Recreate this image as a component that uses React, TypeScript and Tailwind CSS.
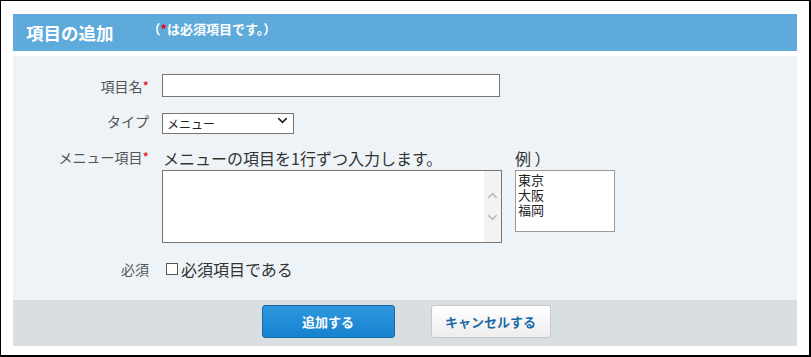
import { ChevronDown, ChevronUp } from 'lucide-react';

const font = { fontFamily: '"Noto Sans CJK JP", "Noto Sans", sans-serif' };

function Label({ text, required }: { text: string; required?: boolean }) {
  return (
    <div className="w-[136px] shrink-0 text-right text-[14px] leading-[20px] text-[#555]">
      {text}
      {required && <span className="text-[#e60012]">*</span>}
    </div>
  );
}

export default function App() {
  return (
    <div
      className="w-[811px] h-[357px] bg-white border-l border-t border-r-2 border-b-2 border-black box-border pt-[13px] pl-[12px] pr-[12px]"
      style={font}
    >
      {/* Header */}
      <div className="h-[37px] bg-[#5eaadb] flex items-center pl-[13px]">
        <span className="text-white font-bold text-[17.5px] leading-none">項目の追加</span>
        <span className="ml-[34px] -mt-[9px] text-white font-bold text-[13px] leading-none">
          （<span className="text-[#e60012]">*</span>は必須項目です。）
        </span>
      </div>

      {/* Body */}
      <div className="mt-[5px] bg-[#eef3f7] pt-[18px] pb-[21px] flex flex-col">
        <div className="flex items-center gap-[13px] h-[23px]">
          <Label text="項目名" required />
          <input
            type="text"
            className="w-[338px] h-[23px] bg-white border border-[#767676] outline-none px-1 text-[13px]"
          />
        </div>

        <div className="flex items-center gap-[13px] mt-[13px] h-[21px]">
          <Label text="タイプ" />
          <div className="relative w-[132px] h-[21px]">
            <select className="appearance-none w-full h-full bg-white border border-[#767676] rounded-none pl-[4px] text-[12px] leading-[19px] text-[#222] outline-none">
              <option>メニュー</option>
            </select>
            <ChevronDown
              className="absolute right-[4px] top-[3px] w-[15px] h-[15px] text-[#222] pointer-events-none"
              strokeWidth={2.5}
            />
          </div>
        </div>

        <div className="flex items-start gap-[13px] mt-[15px]">
          <div className="pt-[1px]">
            <Label text="メニュー項目" required />
          </div>
          <div className="flex flex-col">
            <div className="text-[16px] leading-[24px] text-[#333] pl-[1px]">
              メニューの項目を1行ずつ入力します。
            </div>
            <div className="w-[340px] h-[73px] bg-white border border-[#767676] flex">
              <textarea className="flex-1 resize-none outline-none border-none bg-white" />
              <div className="w-[17px] bg-[#f3f3f3] flex flex-col items-center justify-center gap-[7px]">
                <ChevronUp className="w-[15px] h-[15px] text-[#bdbdbd]" strokeWidth={2.5} />
                <ChevronDown className="w-[15px] h-[15px] text-[#bdbdbd]" strokeWidth={2.5} />
              </div>
            </div>
          </div>
          <div className="flex flex-col">
            <div className="text-[16px] leading-[24px] text-[#333]">例 ）</div>
            <textarea
              readOnly
              value={'東京\n大阪\n福岡'}
              className="w-[100px] h-[62px] bg-white border border-[#999] pl-[2px] pt-[1px] text-[13px] leading-[15px] text-[#222] resize-none outline-none overflow-hidden"
              style={font}
            />
          </div>
        </div>

        <div className="flex items-center gap-[13px] mt-[15px] h-[21px]">
          <Label text="必須" />
          <div className="flex items-center text-[16px] leading-[20px] text-[#333] pl-[4px]">
            <span className="w-[12px] h-[12px] border border-[#555] bg-white mr-[3px]" />
            必須項目である
          </div>
        </div>
      </div>

      {/* Footer */}
      <div className="h-[46px] bg-[#d9dee1] flex items-start justify-center gap-[36px] pt-[5px] pl-[2px]">
        <button className="w-[133px] h-[33px] rounded-[3px] border border-[#1668a6] bg-gradient-to-b from-[#2e98de] to-[#1582cf] text-white font-bold text-[13px]">
          追加する
        </button>
        <button className="w-[120px] h-[33px] rounded-[3px] border border-[#c5c9cc] bg-gradient-to-b from-white to-[#ededed] text-[#1b6aa8] font-bold text-[13px]">
          キャンセルする
        </button>
      </div>
    </div>
  );
}
